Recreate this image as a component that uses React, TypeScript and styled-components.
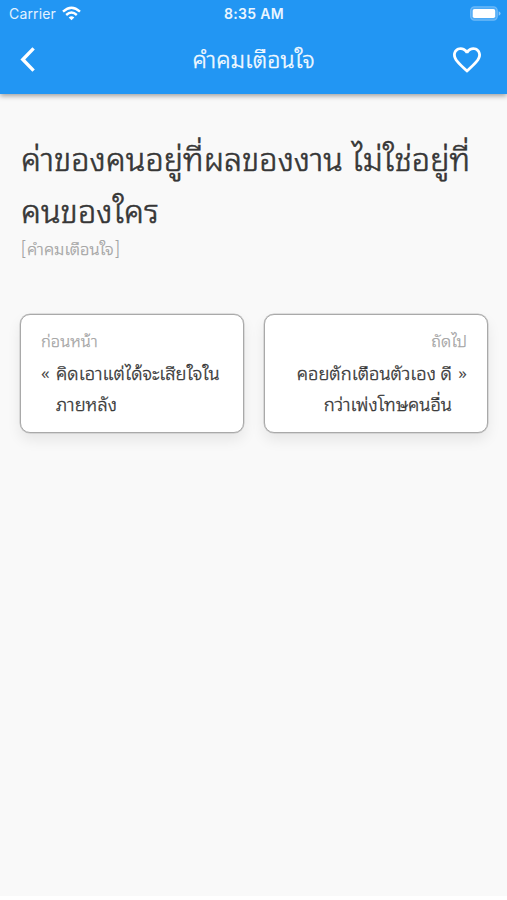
import React from "react";
import styled, { createGlobalStyle } from "styled-components";

const thai = '"Noto Sans Thai Looped", "Noto Sans", sans-serif';

const GlobalStyle = createGlobalStyle`
  * { box-sizing: border-box; }
  body { margin: 0; background: #fff; font-family: ${thai}; }
`;

const Screen = styled.div`
  width: 507px;
  height: 896px;
  background: #f9f9f9;
`;

const Header = styled.header`
  height: 94px;
  background: #2296f3;
  color: #fff;
  box-shadow: 0 2px 5px rgba(0, 0, 0, 0.36);
`;

const StatusBar = styled.div`
  height: 27px;
  display: grid;
  grid-template-columns: 1fr auto 1fr;
  align-items: center;
  padding: 0 6px 2px 9px;
  font-family: Inter, sans-serif;
  font-size: 14px;
  line-height: 25px;
`;

const Carrier = styled.div`
  display: flex;
  align-items: center;
  gap: 6px;
  color: #e3f2ff;
  letter-spacing: 0.15px;
`;

const Clock = styled.div`
  padding: 1px 2px 0 0;
  font-size: 14px;
  font-weight: 600;
  letter-spacing: 0.35px;
  color: #eaf5ff;
`;

const Battery = styled.svg`
  justify-self: end;
`;

const TitleBar = styled.div`
  height: 66px;
  display: grid;
  grid-template-columns: 60px 1fr 60px;
  align-items: center;
`;

const IconButton = styled.button<{ $side: "left" | "right" }>`
  display: flex;
  justify-content: ${(p) => (p.$side === "left" ? "flex-start" : "flex-end")};
  padding: ${(p) => (p.$side === "left" ? "0 0 1px 20px" : "0 26px 1px 0")};
  border: 0;
  background: none;
  color: inherit;
`;

const ThaiText = styled.div<{ $size: number; $line: number; $stroke: number; $tone: string }>`
  margin: 0;
  font-family: ${thai};
  font-weight: 300;
  font-size: ${(p) => p.$size}px;
  line-height: ${(p) => p.$line}px;
  color: ${(p) => p.$tone};
  -webkit-text-stroke: ${(p) => p.$stroke}px ${(p) => p.$tone};
  white-space: nowrap;
`;

const Title = styled(ThaiText)`
  padding-bottom: 5px;
  text-align: center;
`;

const Category = styled(ThaiText)`
  display: flex;
  align-items: center;
  height: 26px;
  margin-top: 1px;
`;

const Bracket = styled.span`
  width: 6px;
  padding-top: 1px;
  font-family: Roboto, sans-serif;
  font-size: 18px;
  -webkit-text-stroke: 0;
  &:last-child { text-align: right; }
`;

const Content = styled.main`
  padding: 36px 19px 0 21px;
`;

const Pager = styled.nav`
  display: grid;
  grid-template-columns: 1fr 1fr;
  gap: 20px;
  margin: 53px 0 0 -1px;
`;

const Card = styled.a<{ $align: "left" | "right" }>`
  height: 119px;
  padding: 10px 20px;
  border: 1px solid #a9a9a9;
  border-radius: 10px;
  background: #fff;
  box-shadow: 0 0 0 0.5px rgba(169, 169, 169, 0.6), 0 7px 14px rgba(0, 0, 0, 0.08);
  text-align: ${(p) => p.$align};
`;

const CardBody = styled.div<{ $align: "left" | "right" }>`
  display: flex;
  justify-content: ${(p) => (p.$align === "left" ? "flex-start" : "flex-end")};
  gap: 6px;
  margin-top: 3px;
`;

const Chevrons = styled.span`
  width: 9px;
  font-family: "Noto Sans", sans-serif;
  font-size: 17px;
  line-height: 31px;
  color: #484848;
`;

const dark = "#363636";
const grey = "#a4a4a4";

export default function App() {
  return (
    <>
      <GlobalStyle />
      <Screen>
        <Header>
          <StatusBar>
            <Carrier>
              Carrier
              <svg width="19" height="15" viewBox="0 0 19 15" fill="none" stroke="#fff" strokeWidth="2.4">
                <path d="M1 5.6Q9.5 -2.2 18 5.6" />
                <path d="M4.2 9Q9.5 4.2 14.8 9" />
                <path d="M9.5 14.2L6.7 11.4Q9.5 9 12.3 11.4Z" fill="#fff" stroke="none" />
              </svg>
            </Carrier>
            <Clock>8:35 AM</Clock>
            <Battery width="31" height="15" viewBox="0 0 31 15">
              <rect x="0.7" y="0.9" width="26.5" height="13.2" rx="3.8" fill="#4daaf6" stroke="#6fbaf8" strokeWidth="1.3" />
              <rect x="2.7" y="3" width="22.5" height="9" rx="1.8" fill="#fff" />
              <path d="M28.7 5.3Q30.6 6 30.6 7.5T28.7 9.7Z" fill="#8cc8f9" />
            </Battery>
          </StatusBar>
          <TitleBar>
            <IconButton $side="left" aria-label="ย้อนกลับ">
              <svg width="15" height="25" viewBox="0 0 15 25" fill="none" stroke="#fff" strokeWidth="3.4">
                <path d="M13.6 1.4L2.8 12.5L13.6 23.6" />
              </svg>
            </IconButton>
            <Title $size={23.4} $line={61} $stroke={0.4} $tone="#f4faff">คำคมเตือนใจ</Title>
            <IconButton $side="right" aria-label="ถูกใจ">
              <svg width="28" height="26" viewBox="2 3 20 18.35" fill="#fff">
                <path d="M16.5 3c-1.74 0-3.41.81-4.5 2.09C10.91 3.81 9.24 3 7.5 3 4.42 3 2 5.42 2 8.5c0 3.78 3.4 6.86 8.55 11.54L12 21.35l1.45-1.32C18.6 15.36 22 12.28 22 8.5 22 5.42 19.58 3 16.5 3zm-4.4 15.55l-.1.1-.1-.1C7.14 14.24 4 11.39 4 8.5 4 6.5 5.5 5 7.5 5c1.54 0 3.04.99 3.57 2.36h1.87C13.46 5.99 14.96 5 16.5 5c2 0 3.5 1.5 3.5 3.5 0 2.89-3.14 5.74-7.9 10.05z" />
              </svg>
            </IconButton>
          </TitleBar>
        </Header>
        <Content>
          <ThaiText as="h1" $size={32.4} $line={52} $stroke={0.6} $tone={dark}>
            ค่าของคนอยู่ที่ผลของงาน ไม่ใช่อยู่ที่<br />คนของใคร
          </ThaiText>
          <Category $size={16.6} $line={26} $stroke={0.25} $tone={grey}>
            <Bracket>[</Bracket>คำคมเตือนใจ<Bracket>]</Bracket>
          </Category>
          <Pager>
            <Card $align="left">
              <ThaiText $size={16.5} $line={29} $stroke={0.25} $tone={grey}>ก่อนหน้า</ThaiText>
              <CardBody $align="left">
                <Chevrons>«</Chevrons>
                <ThaiText $size={18.4} $line={30.5} $stroke={0.35} $tone={dark}>คิดเอาแต่ได้จะเสียใจใน<br />ภายหลัง</ThaiText>
              </CardBody>
            </Card>
            <Card $align="right">
              <ThaiText $size={16.5} $line={29} $stroke={0.25} $tone={grey}>ถัดไป</ThaiText>
              <CardBody $align="right">
                <ThaiText $size={18.4} $line={30.5} $stroke={0.35} $tone={dark}>คอยตักเตือนตัวเอง ดี<br />กว่าเพ่งโทษคนอื่น</ThaiText>
                <Chevrons>»</Chevrons>
              </CardBody>
            </Card>
          </Pager>
        </Content>
      </Screen>
    </>
  );
}
